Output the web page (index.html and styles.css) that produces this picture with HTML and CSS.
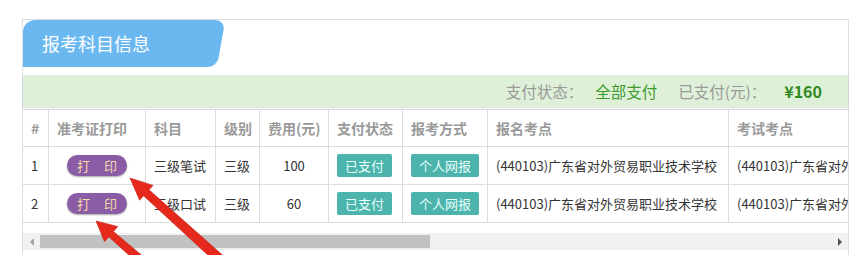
FILE: index.html
```html
<!DOCTYPE html>
<html lang="zh-CN">
<head>
<meta charset="utf-8">
<title>报考科目信息</title>
<link rel="stylesheet" href="styles.css">
</head>
<body>
<div class="panel">
  <div class="panel-head"><div class="tab">报考科目信息</div></div>
  <div class="summary">
    <span class="label">支付状态：</span><span class="value">全部支付</span>
    <span class="label">已支付(元)：</span><span class="value amount">¥160</span>
  </div>
  <div class="table-wrap">
    <table class="grid">
      <thead>
        <tr>
          <th class="w-no">#</th>
          <th class="w-print">准考证打印</th>
          <th class="w-subj">科目</th>
          <th class="w-level">级别</th>
          <th class="w-fee">费用(元)</th>
          <th class="w-pay">支付状态</th>
          <th class="w-way">报考方式</th>
          <th class="w-site">报名考点</th>
          <th class="w-site">考试考点</th>
        </tr>
      </thead>
      <tbody>
        <tr>
          <td>1</td>
          <td class="center"><span class="print-btn"><span>打</span><span>印</span></span></td>
          <td>三级笔试</td>
          <td>三级</td>
          <td class="center">100</td>
          <td><span class="badge">已支付</span></td>
          <td><span class="badge">个人网报</span></td>
          <td>(440103)广东省对外贸易职业技术学校</td>
          <td>(440103)广东省对外贸易职业技术学校</td>
        </tr>
        <tr>
          <td>2</td>
          <td class="center"><span class="print-btn"><span>打</span><span>印</span></span></td>
          <td>三级口试</td>
          <td>三级</td>
          <td class="center">60</td>
          <td><span class="badge">已支付</span></td>
          <td><span class="badge">个人网报</span></td>
          <td>(440103)广东省对外贸易职业技术学校</td>
          <td>(440103)广东省对外贸易职业技术学校</td>
        </tr>
      </tbody>
    </table>
  </div>
  <div class="hscroll">
    <span class="sb-btn"><span class="tri-left"></span></span>
    <span class="sb-track"><span class="sb-thumb"></span></span>
    <span class="sb-btn"><span class="tri-right"></span></span>
  </div>
</div>
<svg class="callouts" width="867" height="255" viewBox="0 0 867 255">
  <polygon points="130,178 153,185.4 149,189.8 229.7,261.5 222.9,268.9 143.6,195.8 139.6,200.2"/>
  <polygon points="96,221 117.7,226.6 113.4,231.6 151.8,263.7 145.8,270.5 108.8,236.8 104.5,241.7"/>
</svg>
</body>
</html>
```

FILE: styles.css
```css
html, body {
  margin: 0;
  background: #fff;
}
body {
  width: 867px;
  height: 255px;
  overflow: hidden;
  font-family: "Noto Sans CJK SC", "Microsoft YaHei", sans-serif;
  color: #333;
  position: relative;
}
.panel {
  margin: 19px 0 0 22px;
  width: 825px;
  border: 1px solid #d8dfe7;
  padding-bottom: 20px;
}
.panel-head {
  height: 47px;
  margin-bottom: 8px;
}
.tab {
  position: relative;
  width: 180px;
  height: 47px;
  box-sizing: border-box;
  padding-left: 19px;
  background: #6bb8f0;
  border-top-left-radius: 12px;
  color: #fff;
  font-size: 18px;
  line-height: 47px;
  white-space: nowrap;
}
.tab::after {
  content: "";
  position: absolute;
  top: 0;
  right: -14px;
  width: 28px;
  height: 47px;
  background: #6bb8f0;
  border-radius: 0 10px 9px 0;
  transform: skewX(-10deg);
  transform-origin: bottom left;
}
.summary {
  height: 32px;
  background: #dff0d8;
  display: flex;
  justify-content: flex-end;
  align-items: center;
  padding-right: 26px;
  font-size: 15.5px;
  box-shadow: 0 1px 2px rgba(0, 0, 0, 0.14);
}
.label {
  color: #999;
}
.value {
  color: #3b9b2b;
  margin-left: 12px;
  margin-right: 21px;
}
.amount {
  font-weight: bold;
  font-size: 16px;
  color: #2e8b1f;
  margin-left: 18px;
  margin-right: 0;
}
.table-wrap {
  margin-top: 2px;
  width: 825px;
  overflow: hidden;
}
.grid {
  border-collapse: separate;
  border-spacing: 0;
  table-layout: fixed;
  width: 947px;
}
.grid th, .grid td {
  box-sizing: border-box;
  border-right: 1px solid #ddd;
  border-bottom: 1px solid #ddd;
  padding: 0 8px;
  text-align: left;
  white-space: nowrap;
  overflow: hidden;
  vertical-align: middle;
}
.grid th {
  border-top: 1px solid #ddd;
  height: 38px;
  font-size: 14px;
  font-weight: bold;
  color: #999;
}
.grid td {
  height: 38px;
  font-size: 13px;
}
.grid .center {
  text-align: center;
}
.w-no { width: 26px; }
.w-print { width: 97px; }
.w-subj { width: 70px; }
.w-level { width: 44px; }
.w-fee { width: 69px; }
.w-pay { width: 74px; }
.w-way { width: 85px; }
.w-site { width: 241px; }
.print-btn {
  display: inline-flex;
  align-items: center;
  justify-content: center;
  gap: 14px;
  width: 60px;
  height: 21px;
  border-radius: 11px;
  background: #8b5ca6;
  color: #f7d8a6;
  font-size: 13px;
  box-shadow: 0 1px 2px rgba(0, 0, 0, 0.35);
  vertical-align: middle;
}
.badge {
  display: inline-block;
  height: 23px;
  line-height: 23px;
  padding: 0 8px;
  background: #4cb4ac;
  color: #e6fffa;
  font-size: 13px;
  border-radius: 2px;
  vertical-align: middle;
}
.hscroll {
  display: flex;
  height: 17px;
  margin-top: 10px;
  background: #f1f1f1;
}
.sb-btn {
  width: 17px;
  display: flex;
  align-items: center;
  justify-content: center;
}
.tri-left {
  width: 0;
  height: 0;
  border-style: solid;
  border-width: 4px 4px 4px 0;
  border-color: transparent #a3a3a3 transparent transparent;
}
.tri-right {
  width: 0;
  height: 0;
  border-style: solid;
  border-width: 4px 0 4px 4px;
  border-color: transparent transparent transparent #505050;
}
.sb-track {
  flex: 1;
  display: flex;
  align-items: center;
}
.sb-thumb {
  width: 390px;
  height: 13px;
  background: #c1c1c1;
}
.callouts {
  position: absolute;
  left: 0;
  top: 0;
  pointer-events: none;
}
.callouts polygon {
  fill: #e6291d;
  stroke: #c51d12;
  stroke-width: 0.6;
}
```
